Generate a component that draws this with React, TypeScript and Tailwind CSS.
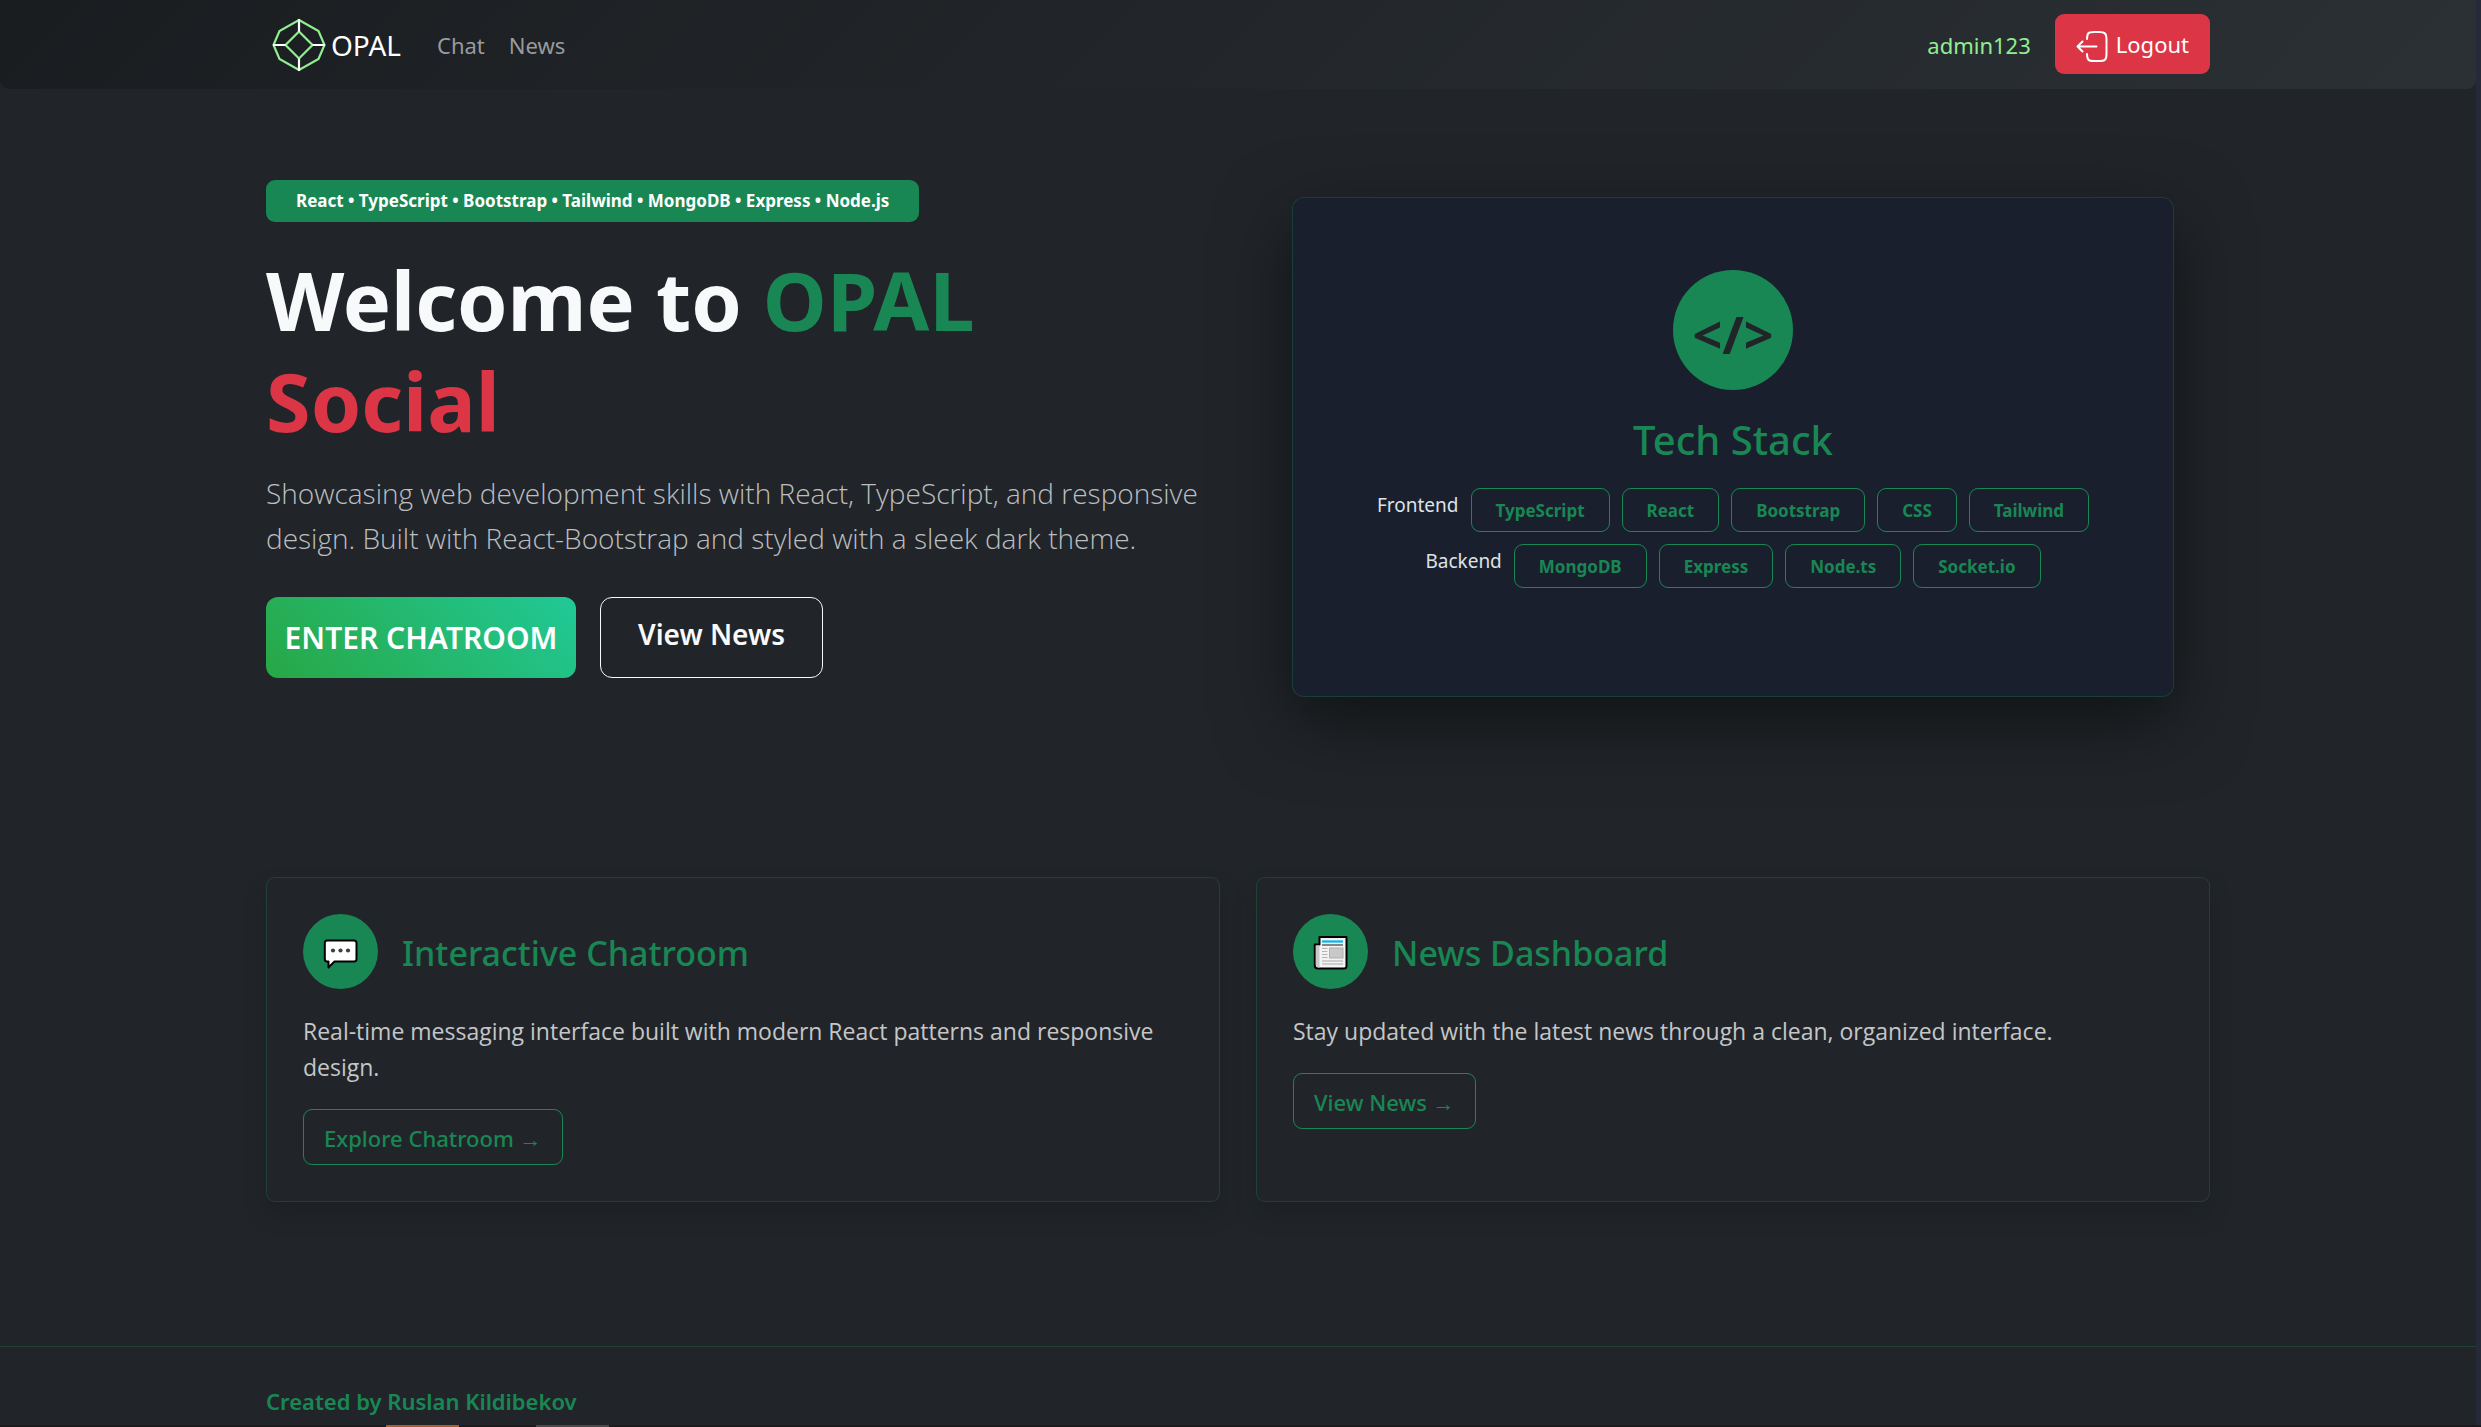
const frontend = ["TypeScript", "React", "Bootstrap", "CSS", "Tailwind"];
const backend = ["MongoDB", "Express", "Node.ts", "Socket.io"];

function OpalLogo() {
  return (
    <svg width="54" height="54" viewBox="0 0 54 54" fill="none" strokeWidth="2.2" aria-hidden="true">
      <path
        d="M27 2 46.5 13 52.5 27 46.5 41 27 52 7.5 41 1.5 27 7.5 13Z M27 13.5 40.5 27 27 40.5 13.5 27Z"
        stroke="#90ee90"
      />
      <path d="M27 1v12.5M27 40.5V53M1 27h12.5M40.5 27H53" stroke="#fff" />
    </svg>
  );
}

function LogoutIcon() {
  return (
    <svg
      width="32"
      height="36"
      viewBox="0 0 32 36"
      fill="none"
      stroke="#fff"
      strokeWidth="2"
      strokeLinecap="round"
      strokeLinejoin="round"
      aria-hidden="true"
    >
      <path d="M11 13c.2-6 1.200-7 7-7h5c6 0 7.500 1.500 7.500 7.500v14.500c0 6-1.500 7-7.500 7h-5c-5.800 0-6.800-1-7-7" />
      <path d="M20.500 20.500H1.500M6.500 15.500l-5 5 5 5" />
    </svg>
  );
}

function ChatIcon() {
  return (
    <svg width="36" height="36" viewBox="0 0 36 36" aria-hidden="true">
      <path
        d="M4 6.500h27q2.500 0 2.500 2.500v16q0 2.500-2.500 2.500H11.500L5.500 33.500V27.500H4Q1.800 27.500 1.800 25V9q0-2.500 2.200-2.500Z"
        fill="#fff"
        stroke="#000"
        strokeWidth="2"
        strokeLinejoin="round"
      />
      <circle cx="10" cy="16.500" r="2.100" fill="#3f3f3f" />
      <circle cx="17.500" cy="16.500" r="2.100" fill="#3f3f3f" />
      <circle cx="25" cy="16.500" r="2.100" fill="#3f3f3f" />
    </svg>
  );
}

function NewsIcon() {
  return (
    <svg width="36" height="36" viewBox="0 0 36 36" aria-hidden="true">
      <path
        d="M6.500 3h27v29q0 2.500-2.500 2.500H5Q1.800 34.500 1.800 31.500V10.500h4.700Z"
        fill="#f3f3f3"
        stroke="#000"
        strokeWidth="2"
        strokeLinejoin="round"
      />
      <path d="M2.800 11.500h3.700V33.500Q2.800 33.500 2.800 30Z" fill="#c9c9c9" />
      <path d="M9 7.500h21" stroke="#00b7f1" strokeWidth="2.200" />
      <path d="M9 11h21" stroke="#3f3f3f" strokeWidth="1.200" />
      <path d="M9 14.500h5.500M9 17.500h5.500M9 20.500h5.500M9 23.500h5.500" stroke="#b4b4b4" strokeWidth="1.200" />
      <rect x="16.500" y="14" width="13.500" height="10" fill="#c8c8c8" stroke="#b0b0b0" />
      <path d="M9 27h21M9 30h21" stroke="#a8a8a8" strokeWidth="1.200" />
    </svg>
  );
}

function StackRow({ label, items }: { label: string; items: string[] }) {
  return (
    <div className="flex items-start justify-center gap-3">
      <span className="text-[19px] leading-[34px] text-[#dee2e6]">{label}</span>
      {items.map((item) => (
        <span
          key={item}
          className="rounded-[9px] border border-[#198754] px-6 pt-0.5 text-[17px] font-bold leading-10 text-[#198754]"
        >
          {item}
        </span>
      ))}
    </div>
  );
}

function FeatureCard(props: { icon: React.ReactNode; title: string; text: string; action: string }) {
  return (
    <article className="rounded-[9px] border border-[#198754]/30 bg-[#212529] p-9 shadow-[0_12px_24px_rgba(0,0,0,0.15)]">
      <div className="flex items-center gap-6">
        <div className="flex size-[75px] items-center justify-center rounded-full bg-[#198754]">{props.icon}</div>
        <h2 className="pt-0.5 text-[34px] font-medium leading-[42px] text-[#198754]">{props.title}</h2>
      </div>
      <p className="mt-6 font-['Open_Sans',sans-serif] text-[23px] leading-9 text-[#c4c6c8]">{props.text}</p>
      <button
        type="button"
        className="mt-6 h-14 rounded-[9px] border border-[#198754] px-5 pt-0.5 text-[22px] font-medium text-[#198754]"
      >
        {props.action}
      </button>
    </article>
  );
}

export default function App() {
  return (
    <div className="min-h-screen bg-[#262a38] font-['Noto_Sans',sans-serif]">
      <div className="mr-[5px] bg-[#212529]">
        <header className="rounded-b-[9px] bg-[linear-gradient(135deg,#1a1d20,#2b3035)] pb-px">
          <div className="mx-auto flex h-[88px] max-w-[1944px] items-center">
            <a href="#" className="flex items-center gap-[5px] pl-1.5 pt-0.5 text-[28px] text-white">
              <OpalLogo />
              OPAL
            </a>
            <nav className="ml-9 flex gap-6 pt-0.5 text-[22px] text-[#999b9d]">
              <a href="#chat">Chat</a>
              <a href="#news">News</a>
            </nav>
            <span className="ml-auto pt-0.5 text-[22px] text-[#90ee90]">admin123</span>
            <button
              type="button"
              className="ml-6 flex h-[60px] items-center gap-2 rounded-[9px] bg-[#dc3545] px-[21px] text-[22px] leading-9 text-white"
            >
              <LogoutIcon />
              Logout
            </button>
          </div>
        </header>

        <main className="mx-auto max-w-[1944px]">
          <section className="grid grid-cols-2 items-center gap-9 pt-[91px]">
            <div className="pb-9">
              <span className="inline-block rounded-[9px] bg-[#198754] px-[30px] py-3 align-top text-[17px] font-bold leading-[18px] text-white">
                React • TypeScript • Bootstrap • Tailwind • MongoDB • Express • Node.js
              </span>
              <h1 className="mt-[27px] text-[81px] font-bold leading-[101px] text-[#f8f9fa]">
                Welcome to <span className="text-[#198754]">OPAL</span>
                <br />
                <span className="text-[#dc3545]">Social</span>
              </h1>
              <p className="mt-5 font-['Open_Sans',sans-serif] text-[28px] font-light leading-[45px] text-[#bcbec0]">
                Showcasing web development skills with React, TypeScript, and responsive design. Built with
                React-Bootstrap and styled with a sleek dark theme.
              </p>
              <div className="mt-9 flex gap-6">
                <button
                  type="button"
                  className="h-[81px] w-[310px] rounded-xl bg-[linear-gradient(45deg,#28a745,#20c997)] text-[30px] font-semibold text-white"
                >
                  ENTER CHATROOM
                </button>
                <button
                  type="button"
                  className="flex h-[81px] w-[223px] justify-center rounded-xl border border-[#f8f9fa] pt-3.5 text-[28px] font-semibold leading-[45px] text-[#f8f9fa]"
                >
                  View News
                </button>
              </div>
            </div>

            <div className="mx-9 flex min-h-[500px] flex-col items-center justify-center rounded-xl border border-[#198754]/30 bg-[#1a1f2e] pb-9 shadow-[0_24px_72px_rgba(0,0,0,0.5)]">
              <div className="flex size-[120px] items-center justify-center rounded-full bg-[#198754] pt-2 text-[52px] font-bold leading-none text-[#212529]">
                {"</>"}
              </div>
              <h2 className="mb-[22px] mt-6 text-[40px] font-medium leading-[52px] text-[#198754]">Tech Stack</h2>
              <div className="flex flex-col gap-3">
                <StackRow label="Frontend" items={frontend} />
                <StackRow label="Backend" items={backend} />
              </div>
            </div>
          </section>

          <section className="mt-[163px] grid grid-cols-2 gap-9">
            <FeatureCard
              icon={<ChatIcon />}
              title="Interactive Chatroom"
              text="Real-time messaging interface built with modern React patterns and responsive design."
              action="Explore Chatroom →"
            />
            <FeatureCard
              icon={<NewsIcon />}
              title="News Dashboard"
              text="Stay updated with the latest news through a clean, organized interface."
              action="View News →"
            />
          </section>
        </main>

        <footer className="mt-36 border-t border-[#198754]/30 pb-1.5 pt-9">
          <p className="mx-auto max-w-[1944px] text-[22px] font-semibold leading-9 text-[#198754]">
            Created by Ruslan Kildibekov
          </p>
        </footer>
      </div>
      <div className="flex h-0.5 gap-[77px] bg-[#1b1a1c] pl-[386px]">
        <div className="w-[73px] bg-[#a5602e]" />
        <div className="w-[73px] bg-[#49494b]" />
      </div>
    </div>
  );
}
